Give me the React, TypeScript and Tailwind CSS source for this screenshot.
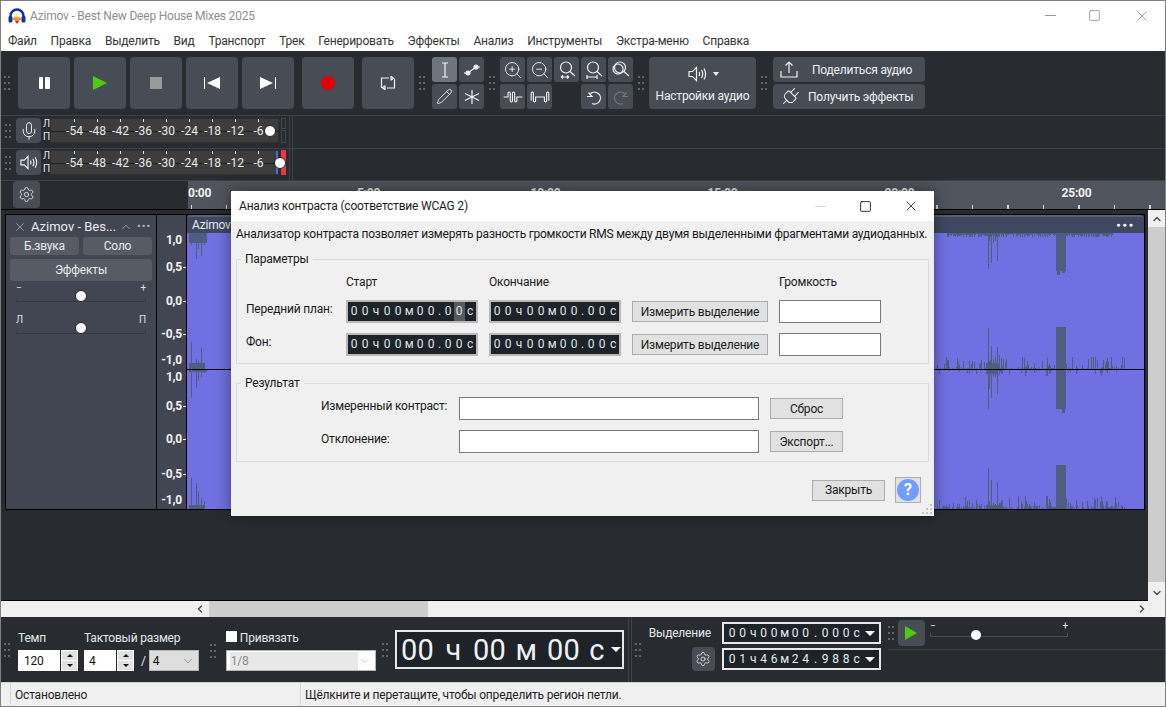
import { ChevronDown, ChevronLeft, ChevronRight, ChevronUp, Mic, Pencil, Plug, Settings, ZoomIn, ZoomOut, Minus, Square, X } from "lucide-react";
import type { ReactNode } from "react";

const font = "font-['Roboto','Liberation_Sans',sans-serif] tracking-[-0.2px]";

const menu = [
  "Файл",
  "Правка",
  "Выделить",
  "Вид",
  "Транспорт",
  "Трек",
  "Генерировать",
  "Эффекты",
  "Анализ",
  "Инструменты",
  "Экстра-меню",
  "Справка",
];

const meterLabels = ["-54", "-48", "-42", "-36", "-30", "-24", "-18", "-12", "-6"];

const ampRows = [
  { label: "1,0", top: "mt-[18px]", tick: false },
  { label: "0,5", top: "mt-[13px]", tick: true },
  { label: "0,0", top: "mt-[20px]", tick: true },
  { label: "-0,5", top: "mt-[19px]", tick: true },
  { label: "-1,0", top: "mt-[12px]", tick: false },
  { label: "1,0", top: "mt-[3px]", tick: false },
  { label: "0,5", top: "mt-[15px]", tick: true },
  { label: "0,0", top: "mt-[19px]", tick: true },
  { label: "-0,5", top: "mt-[21px]", tick: true },
  { label: "-1,0", top: "mt-[12px]", tick: false },
];

// x, hang from top, rise to mid, hang from mid, rise from bottom
const spikes = [
  [192, 12, 27, 29, 31],
  [197, 26, 10, 19, 26],
  [199, 16, 8, 12, 18],
  [202, 23, 21, 8, 11],
  [205, 12, 6, 4, 8],
  [987, 36, 41, 40, 41],
  [988, 8, 8, 20, 8],
  [990, 30, 23, 29, 29],
  [992, 10, 10, 8, 6],
  [994, 8, 12, 8, 5],
  [996, 28, 22, 25, 27],
  [998, 4, 14, 6, 6],
  [1105, 4, 8, 2, 8],
];

function buildWave() {
  let seed = 17;
  const next = () => {
    seed = (seed * 75 + 74) % 65537;
    return seed / 65537;
  };
  let d = "";
  const rect = (x: number, y: number, w: number, h: number) => {
    d += `M${x - 188} ${y}h${w}v${h}h${-w}z`;
  };
  for (let x = 934; x < 1124; x += 1) {
    const r = next();
    const a = next();
    const b = next();
    if (x < 1112 && x > 945) rect(x, 0, 1, 1 + Math.floor(a * 4));
    if (r > 0.5) rect(x, 136 - Math.floor(a * a * 12) - 1, 1, Math.floor(a * a * 12) + 1);
    if (r > 0.6) rect(x, 136, 1, Math.floor(b * b * 7) + 1);
    if (r > 0.4) rect(x, 276 - Math.floor(b * b * 12) - 2, 1, Math.floor(b * b * 12) + 2);
  }
  for (const [x, t, m, h, br] of spikes) {
    rect(x, 0, 1, t);
    rect(x, 136 - m, 1, m);
    rect(x, 136, 1, h);
    rect(x, 276 - br, 1, br);
  }
  rect(190, 0, 18, 10);
  rect(190, 130, 16, 6);
  rect(190, 136, 18, 3);
  rect(190, 272, 16, 4);
  rect(985, 130, 12, 6);
  rect(985, 136, 12, 5);
  rect(985, 272, 12, 4);
  // the loud stretch near 25:00
  rect(1055, 0, 10, 38);
  rect(1056, 38, 3, 4);
  rect(1061, 38, 3, 2);
  rect(1055, 94, 10, 42);
  rect(1055, 136, 10, 40);
  rect(1061, 176, 3, 4);
  rect(1055, 232, 10, 44);
  return d;
}

const wavePath = buildWave();

function Grip() {
  return (
    <div className="grid h-[14px] w-[8px] shrink-0 grid-cols-2 content-between justify-between">
      {[0, 1, 2, 3, 4, 5].map((i) => (
        <span key={i} className="size-[2px] bg-[#62676e]" />
      ))}
    </div>
  );
}

function TBtn({ className, children }: { className: string; children: ReactNode }) {
  return <div className={`flex shrink-0 items-center justify-center rounded-[4px] bg-[#484d55] ${className}`}>{children}</div>;
}

function TransportBtn({ children, className = "" }: { children: ReactNode; className?: string }) {
  return <TBtn className={`size-[52px] ${className}`}>{children}</TBtn>;
}

function Small({ children, active }: { children?: ReactNode; active?: boolean }) {
  return <div className={`flex size-[25px] items-center justify-center rounded-[3px] ${active ? "bg-[#6f757d]" : "bg-[#484d55]"}`}>{children}</div>;
}

function Ico({ children, className = "size-[20px]", stroke = "#f2f2f2" }: { children: ReactNode; className?: string; stroke?: string }) {
  return (
    <svg viewBox="0 0 20 20" fill="none" stroke={stroke} strokeWidth="1.2" className={className}>
      {children}
    </svg>
  );
}

function SpeakerIcon({ className }: { className?: string }) {
  return (
    <Ico className={className}>
      <path d="M2 7.500h3.500L9.500 3.500v13L5.500 12.500H2z" />
      <path d="M12 8c.8 1.300.8 2.700 0 4M14.500 6c1.600 2.600 1.600 5.400 0 8M17 4.500c2 3.400 2 7.600 0 11" />
    </Ico>
  );
}

function Glass({ children }: { children?: ReactNode }) {
  return (
    <Ico>
      <circle cx="9" cy="7.500" r="5.500" />
      <path d="M13 11.500l5 4.500" />
      {children}
    </Ico>
  );
}

function Meter({ kind }: { kind: "mic" | "speaker" }) {
  const mic = kind === "mic";
  return (
    <div className={`flex items-start border-t border-[#3d4248] pl-[4px] ${mic ? "h-[33px] pt-[2px]" : "h-[32px] pt-px"}`}>
      <div className="mt-[6px]">
        <Grip />
      </div>
      <TBtn className="ml-[3px] h-[25px] w-[25px]">
        {mic ? <Mic className="size-[20px] text-[#e8e8e8]" strokeWidth={1.2} /> : <SpeakerIcon className="size-[19px]" />}
      </TBtn>
      <div className="ml-[2px] flex h-[25px] w-[7px] flex-col justify-between text-[10px] leading-[12px] text-[#e6e6e6]">
        <span>Л</span>
        <span>П</span>
      </div>
      <div className="relative h-[25px] w-[229px] border border-[#2f2f2f] bg-[#3d3d3d] tracking-normal">
        <div className="absolute inset-x-0 top-[12px] h-px bg-[#1f1f1f]" />
        <div className="relative flex pl-[12px]">
          {meterLabels.map((m) => (
            <div key={m} className="flex w-[23px] flex-col items-center">
              <span className="h-[3px] w-px bg-[#e0e0e0]" />
              <span className="mt-[2px] bg-[#3d3d3d] text-[12px] leading-[14px] text-[#e8e8e8]">{m}</span>
            </div>
          ))}
        </div>
        {!mic && <span className="absolute right-0 top-0 h-full w-[2px] bg-[#4a6ee0]" />}
        <span className={`absolute top-[6px] size-[12px] rounded-full border border-[#222] bg-white ${mic ? "left-[213px]" : "left-[223px]"}`} />
      </div>
      {mic ? (
        <div className="ml-[2px] flex h-[25px] w-[5px] flex-col gap-px">
          <span className="h-[11px] border border-[#41464c]" />
          <span className="h-[13px] border border-[#41464c]" />
        </div>
      ) : (
        <div className="ml-[2px] h-[25px] w-[5px] bg-[#e83a3a]" />
      )}
      <div className="-mt-[2px] ml-[3px] h-[33px] w-[4px] border-x border-[#3d4248]" />
    </div>
  );
}

function Cells({ text, cell, dot, active }: { text: string; cell: string; dot: string; active?: number }) {
  return (
    <div className="flex">
      {text.split("").map((c, i) => (
        <span key={i} className={`text-center ${c === "." ? dot : cell} ${active === i ? "bg-[#555a60]" : ""}`}>
          {c}
        </span>
      ))}
    </div>
  );
}

function TimeField({ active }: { active?: number }) {
  return (
    <div className="flex h-[23px] w-[132px] items-center justify-center border-2 border-[#b9b9b9] bg-[#1e2329] text-[12px] leading-[19px] text-[#dfe6ea]">
      <Cells text="00ч00м00.00с" cell="w-[11px]" dot="w-[6px]" active={active} />
    </div>
  );
}

function DlgBtn({ children, className = "" }: { children: ReactNode; className?: string }) {
  return <div className={`flex h-[21px] items-center justify-center border border-[#adadad] bg-[#e1e1e1] text-[12px] ${className}`}>{children}</div>;
}

function DlgInput({ className = "" }: { className?: string }) {
  return <div className={`h-[23px] border border-[#7a7a7a] bg-white ${className}`} />;
}

function Spin() {
  return (
    <div className="ml-px flex h-[21px] w-[17px] flex-col gap-px border border-white bg-white">
      <div className="flex flex-1 items-center justify-center bg-[#e1e1e1]">
        <span className="border-x-[3px] border-b-[3px] border-x-transparent border-b-[#111]" />
      </div>
      <div className="flex flex-1 items-center justify-center bg-[#e1e1e1]">
        <span className="border-x-[3px] border-t-[3px] border-x-transparent border-t-[#111]" />
      </div>
    </div>
  );
}

function SelTime({ text }: { text: string }) {
  return (
    <div className="flex h-[22px] w-[159px] items-center border-2 border-[#e8e8e8] bg-[#1e2329] pl-[3px] text-[12px] leading-[18px] text-[#e6ecef]">
      <Cells text={text} cell="w-[10.500px]" dot="w-[9px]" />
      <span className="ml-[3px] border-x-[5px] border-t-[5px] border-x-transparent border-t-white" />
    </div>
  );
}

function VSlider({ left, right, thumb }: { left: string; right: string; thumb: string }) {
  return (
    <div className="relative mx-[10px] h-[26px] w-[130px] text-[10px] leading-[12px] text-[#e0e0e0]">
      <div className="flex justify-between">
        <span>{left}</span>
        <span>{right}</span>
      </div>
      <div className="mt-[4px] h-[4px] border-x border-b border-[#353941]" />
      <span className={`absolute left-[59px] size-[12px] rounded-full border border-[#222] bg-white ${thumb}`} />
    </div>
  );
}

function Dialog() {
  return (
    <div className="absolute left-[230px] top-[190px] flex h-[325px] w-[703px] flex-col bg-[#f0f0f0] text-[12px] text-[#1a1a1a] shadow-[0_0_14px_rgba(0,0,0,0.45)]">
      <div className="flex h-[30px] shrink-0 items-center bg-white pl-[8px]">
        <span className="flex-1">Анализ контраста (соответствие WCAG 2)</span>
        <Minus className="mr-[30px] size-[17px] text-[#c8c8c8]" strokeWidth={1} />
        <Square className="mr-[31px] size-[13px] text-[#111]" strokeWidth={1.6} />
        <X className="mr-[15px] size-[16px] text-[#111]" strokeWidth={1.2} />
      </div>
      <div className="mt-[5px] h-[16px] shrink-0 whitespace-nowrap pl-[5px] leading-[16px] tracking-[-0.23px]">
        Анализатор контраста позволяет измерять разность громкости RMS между двумя выделенными фрагментами аудиоданных.
      </div>
      <fieldset className="mx-[5px] mt-[9px] h-[113px] shrink-0 border border-[#dcdcdc] pl-[9px]">
        <legend className="-ml-[5px] px-[4px] leading-[16px]">Параметры</legend>
        <div className="mt-[7px] grid grid-cols-[100px_143px_143px_147px_102px] items-center gap-y-[10px]">
          <span />
          <span className="h-[16px] leading-[16px]">Старт</span>
          <span className="h-[16px] leading-[16px]">Окончание</span>
          <span />
          <span className="h-[16px] leading-[16px]">Громкость</span>
          <span className="-mt-[6px]">Передний план:</span>
          <TimeField active={10} />
          <TimeField />
          <DlgBtn className="w-[136px]">Измерить выделение</DlgBtn>
          <DlgInput className="w-[102px]" />
          <span className="-mt-[6px]">Фон:</span>
          <TimeField />
          <TimeField />
          <DlgBtn className="w-[136px]">Измерить выделение</DlgBtn>
          <DlgInput className="w-[102px]" />
        </div>
      </fieldset>
      <fieldset className="mx-[5px] mt-[11px] h-[87px] shrink-0 border border-[#dcdcdc] pl-[84px]">
        <legend className="-ml-[80px] px-[4px] leading-[16px]">Результат</legend>
        <div className="mt-[6px] grid grid-cols-[138px_311px_73px] items-center gap-y-[10px]">
          <span className="-mt-[6px]">Измеренный контраст:</span>
          <DlgInput className="w-[300px]" />
          <DlgBtn className="w-[73px]">Сброс</DlgBtn>
          <span className="-mt-[6px]">Отклонение:</span>
          <DlgInput className="w-[300px]" />
          <DlgBtn className="w-[73px]">Экспорт...</DlgBtn>
        </div>
      </fieldset>
      <div className="mr-[13px] mt-[15px] flex items-center justify-end gap-[10px]">
        <DlgBtn className="w-[73px]">Закрыть</DlgBtn>
        <div className="flex size-[26px] items-center justify-center border border-[#adadad] bg-[#e1e1e1]">
          <span className="flex size-[22px] items-center justify-center rounded-full bg-[#6f9eff] text-[16px] font-bold text-white">?</span>
        </div>
      </div>
      <svg viewBox="0 0 10 10" className="absolute bottom-[2px] right-[2px] size-[10px] fill-[#c4c4c4]">
        <rect x="8" y="0" width="2" height="2" />
        <rect x="4" y="4" width="2" height="2" />
        <rect x="8" y="4" width="2" height="2" />
        <rect x="0" y="8" width="2" height="2" />
        <rect x="4" y="8" width="2" height="2" />
        <rect x="8" y="8" width="2" height="2" />
      </svg>
    </div>
  );
}

export default function App() {
  return (
    <div className={`relative flex h-[707px] w-[1166px] flex-col overflow-hidden border border-[#7f7f7f] bg-[#282c30] ${font}`}>
      {/* title bar */}
      <div className="flex h-[29px] shrink-0 items-center bg-white pl-[7px] text-[12px] text-[#8e8e8e]">
        <svg viewBox="0 0 18 18" className="size-[18px]">
          <path d="M2.500 11V9a6.500 6.500 0 0 1 13 0v2" fill="none" stroke="#0d2fa8" strokeWidth="2.400" />
          <rect x="0.500" y="9" width="4" height="6.500" rx="1.500" fill="#0d2fa8" />
          <rect x="13.500" y="9" width="4" height="6.500" rx="1.500" fill="#0d2fa8" />
          <path d="M5 10.500h8v2H5z" fill="#f5b400" />
          <path d="M5 12h1l1-4.500 1 6.500 1-7.500 1 8 1-5.500 1 3h1v1H5z" fill="#f08a10" />
          <path d="M6.500 13.500h5L9 17z" fill="#e21a1a" />
        </svg>
        <span className="ml-[4px] flex-1">Azimov - Best New Deep House Mixes 2025</span>
        <Minus className="mr-[29px] size-[17px] text-[#666]" strokeWidth={1} />
        <Square className="mr-[33px] size-[13px] text-[#666]" strokeWidth={1.1} />
        <X className="mr-[15px] size-[16px] text-[#666]" strokeWidth={1} />
      </div>
      {/* menu */}
      <div className="flex h-[21px] shrink-0 items-center gap-[13.750px] bg-white pl-[7px] text-[12px] text-[#333]">
        {menu.map((m) => (
          <span key={m}>{m}</span>
        ))}
      </div>
      {/* main toolbar */}
      <div className="flex h-[64px] shrink-0 items-center pl-[3px]">
        <Grip />
        <div className="ml-[6px] flex gap-[4px]">
          <TransportBtn>
            <div className="flex gap-[2px]">
              <span className="h-[12px] w-[4.500px] rounded-[1px] bg-white" />
              <span className="h-[12px] w-[4.500px] rounded-[1px] bg-white" />
            </div>
          </TransportBtn>
          <TransportBtn>
            <span className="border-y-[7px] border-l-[14px] border-y-transparent border-l-[#4fcb0e]" />
          </TransportBtn>
          <TransportBtn>
            <span className="size-[12px] bg-[#999]" />
          </TransportBtn>
          <TransportBtn>
            <span className="mr-[2px] h-[12px] w-px bg-white" />
            <span className="border-y-[6px] border-r-[13px] border-y-transparent border-r-white" />
          </TransportBtn>
          <TransportBtn>
            <span className="border-y-[6px] border-l-[13px] border-y-transparent border-l-white" />
            <span className="ml-[2px] h-[12px] w-px bg-white" />
          </TransportBtn>
          <TransportBtn className="ml-[4px]">
            <span className="size-[14px] rounded-full bg-[#e00000]" />
          </TransportBtn>
          <TransportBtn className="ml-[4px]">
            <Ico>
              <path d="M3.500 15V5H11M13 3v4.500M13 3.200L15.500 5.200 13 7.200" />
              <path d="M16.500 5.500V15H9M7 12.500V17M7 12.800L4.500 14.800 7 16.800" />
            </Ico>
          </TransportBtn>
        </div>
        <div className="ml-[5px]">
          <Grip />
        </div>
        <div className="ml-[5px] grid grid-cols-[25px_25px] gap-[2px]">
          <Small active>
            <Ico>
              <path d="M7 3h6M7 17h6M10 3v14" />
            </Ico>
          </Small>
          <Small>
            <Ico>
              <path d="M2 13h4l8-6h4" />
              <circle cx="6" cy="13" r="2" fill="#f2f2f2" />
              <circle cx="14" cy="7" r="2" fill="#f2f2f2" />
            </Ico>
          </Small>
          <Small>
            <Pencil className="size-[17px] text-[#f2f2f2]" strokeWidth={1.2} />
          </Small>
          <Small>
            <Ico>
              <path d="M10 3v14M3 6.500l14 7M17 6.500l-14 7" />
            </Ico>
          </Small>
        </div>
        <div className="ml-[5px]">
          <Grip />
        </div>
        <div className="ml-[3px] grid grid-cols-[25px_25px_25px_25px_25px] gap-[2px]">
          <Small>
            <ZoomIn className="size-[20px] text-[#f2f2f2]" strokeWidth={1.1} />
          </Small>
          <Small>
            <ZoomOut className="size-[20px] text-[#f2f2f2]" strokeWidth={1.1} />
          </Small>
          <Small>
            <Glass>
              <path d="M4 17h8M4 17l2-1.500M4 17l2 1.500M12 17l-2-1.500M12 17l-2 1.500" />
            </Glass>
          </Small>
          <Small>
            <Glass>
              <path d="M3 17h10M3 15v4M13 15v4" />
            </Glass>
          </Small>
          <Small>
            <Glass>
              <circle cx="7" cy="9" r="5" />
            </Glass>
          </Small>
          <Small>
            <Ico className="size-[22px]">
              <path d="M1.500 10h4V6.500a1 1 0 0 1 2 0v7a1 1 0 0 0 2 0v-7a1 1 0 0 1 2 0v7a1 1 0 0 0 2 0V10h5" strokeWidth="1" />
            </Ico>
          </Small>
          <Small>
            <Ico className="size-[22px]">
              <path d="M2 13.500v-7a1 1 0 0 1 2 0v7a1 1 0 0 0 2 0V10h8v3.500a1 1 0 0 0 2 0v-7a1 1 0 0 1 2 0v7" strokeWidth="1" />
            </Ico>
          </Small>
          <span />
          <Small>
            <Ico>
              <path d="M6.500 6.500A6 6 0 1 1 8 16.500" />
              <path d="M3 9.500h5l-3.500-4" />
            </Ico>
          </Small>
          <Small>
            <Ico stroke="#74787e">
              <path d="M13.500 6.500A6 6 0 1 0 12 16.500" />
              <path d="M17 9.500h-5l3.500-4" />
            </Ico>
          </Small>
        </div>
        <div className="ml-[5px]">
          <Grip />
        </div>
        <TBtn className="ml-[3px] h-[52px] w-[107px] flex-col gap-[5px]">
          <div className="flex items-center gap-[6px]">
            <SpeakerIcon className="size-[20px]" />
            <span className="border-x-[3.500px] border-t-[4px] border-x-transparent border-t-[#eee]" />
          </div>
          <span className="text-[12px] leading-[14px] text-[#eef0f2]">Настройки аудио</span>
        </TBtn>
        <div className="ml-[5px]">
          <Grip />
        </div>
        <div className="ml-[4px] flex flex-col gap-[2px]">
          <TBtn className="h-[25px] w-[152px] justify-start pl-[6px]">
            <Ico className="size-[20px]">
              <path d="M2 11v6h16v-6M10 13V2M6.500 5.500L10 2l3.500 3.500" />
            </Ico>
            <span className="ml-[13px] text-[12px] text-[#eef0f2]">Поделиться аудио</span>
          </TBtn>
          <TBtn className="h-[25px] w-[152px] justify-start pl-[6px]">
            <Plug className="size-[22px] rotate-45 text-[#f2f2f2]" strokeWidth={1.1} />
            <span className="ml-[7px] text-[12px] text-[#eef0f2]">Получить эффекты</span>
          </TBtn>
        </div>
      </div>
      {/* meters */}
      <Meter kind="mic" />
      <Meter kind="speaker" />
      {/* timeline */}
      <div className="flex h-[30px] shrink-0 border-y border-t-[#3d4248] border-b-black">
        <div className="w-[187px] shrink-0 pl-[12px]">
          <TBtn className="size-[27px]">
            <Settings className="size-[17px] text-[#e8e8e8]" strokeWidth={1.2} />
          </TBtn>
        </div>
        <div className="relative flex-1 bg-[#50545c] text-[12px] font-bold leading-[24px] text-[#f2f2f2]">
          <div className="flex">
            <span className="w-[92px]">0:00</span>
            <span className="w-[177px] text-center">5:00</span>
            <span className="w-[177px] text-center">10:00</span>
            <span className="w-[177px] text-center">15:00</span>
            <span className="w-[177px] text-center">20:00</span>
            <span className="w-[177px] text-center">25:00</span>
          </div>
          <div className="absolute inset-x-0 bottom-0 h-[4px] bg-[repeating-linear-gradient(90deg,#d8d8d8_0,#d8d8d8_1px,transparent_1px,transparent_35.500px)] bg-[position:3px_0]" />
        </div>
      </div>
      {/* tracks */}
      <div className="flex min-h-0 flex-1">
        <div className="min-w-0 flex-1 border-b border-black pl-[4px] pt-[4px]">
          <div className="flex h-[296px] w-[1140px] border border-black">
            <div className="flex w-[151px] shrink-0 flex-col border-r border-black bg-[#414652] text-[12px] text-[#e8eaee]">
              <div className="flex h-[22px] items-center pl-[7px] pt-[2px]">
                <X className="size-[14px] text-[#cfd2d6]" strokeWidth={1} />
                <span className="ml-[4px] w-[88px] whitespace-nowrap text-[13px] tracking-normal">Azimov - Bes...</span>
                <ChevronUp className="size-[14px] text-[#cfd2d6]" strokeWidth={1} />
                <span className="ml-[4px] text-[11px] tracking-[1px] text-[#b5b8bd]">•••</span>
              </div>
              <div className="flex gap-[4px] px-[4px]">
                <div className="flex h-[18px] w-[69px] items-center justify-center rounded-[3px] bg-[#565b64]">Б.звука</div>
                <div className="flex h-[18px] w-[69px] items-center justify-center rounded-[3px] bg-[#565b64]">Соло</div>
              </div>
              <div className="mx-[4px] mt-[4px] flex h-[22px] items-center justify-center rounded-[3px] bg-[#565b64]">Эффекты</div>
              <div className="mt-px">
                <VSlider left="−" right="+" thumb="top-[8px]" />
              </div>
              <div className="mt-[6px]">
                <VSlider left="Л" right="П" thumb="top-[8px]" />
              </div>
            </div>
            <div className="flex w-[30px] shrink-0 flex-col border-r border-black bg-[#414652] text-[12px] font-bold leading-[14px] text-[#f2f2f2]">
              {ampRows.map((r, i) => (
                <div key={i} className={`flex h-[14px] items-center justify-end ${r.top}`}>
                  <span>{r.label}</span>
                  <span className={`ml-px h-px w-[3px] ${r.tick ? "bg-[#f2f2f2]" : ""}`} />
                </div>
              ))}
            </div>
            <div className="flex min-w-0 flex-1 flex-col">
              <div className="flex h-[18px] shrink-0 items-center rounded-t-[4px] border-t-2 border-[#5a6072] bg-[#3f4860] pl-[5px] pr-[9px] text-[12px] text-[#e8eaee]">
                <span className="flex-1">Azimov</span>
                <span className="text-[7px] tracking-[2px] text-white">●●●</span>
              </div>
              <svg viewBox="0 0 955 276" preserveAspectRatio="none" shapeRendering="crispEdges" className="block h-[276px] w-full bg-[#7070e2]">
                <path d={wavePath} fill="#4f5d80" />
                <rect x="0" y="136" width="955" height="1" fill="#000" />
              </svg>
            </div>
          </div>
        </div>
        <div className="flex w-[17px] shrink-0 flex-col bg-[#f0f0f0]">
          <div className="flex h-[17px] items-center justify-center">
            <ChevronUp className="size-[12px] text-[#505050]" strokeWidth={3} />
          </div>
          <div className="h-[355px] bg-[#cdcdcd]" />
          <div className="flex flex-1 items-end justify-center pb-[2px]">
            <ChevronDown className="size-[12px] text-[#505050]" strokeWidth={3} />
          </div>
        </div>
      </div>
      {/* horizontal scrollbar */}
      <div className="flex h-[16px] shrink-0 items-center bg-[#f0f0f0] pl-[193px] pr-[17px]">
        <ChevronLeft className="size-[12px] text-[#505050]" strokeWidth={3} />
        <div className="ml-[3px] h-full w-[219px] bg-[#cdcdcd]" />
        <div className="flex-1" />
        <ChevronRight className="size-[12px] text-[#505050]" strokeWidth={3} />
      </div>
      {/* bottom toolbar */}
      <div className="flex h-[65px] shrink-0 items-center pl-[3px] text-[12px] text-[#e4e8ea]">
        <Grip />
        <div className="ml-[6px] pt-px">
          <div className="flex h-[21px] items-start">
            <span className="w-[66px]">Темп</span>
            <span>Тактовый размер</span>
          </div>
          <div className="flex items-center text-[#111]">
            <div className="flex h-[21px] w-[42px] items-center border border-white bg-white pl-[5px]">120</div>
            <Spin />
            <div className="ml-[6px] flex h-[21px] w-[32px] items-center bg-white pl-[5px]">4</div>
            <Spin />
            <span className="ml-[7px] text-[#e4e8ea]">/</span>
            <div className="ml-[3px] flex h-[21px] w-[50px] items-center justify-between border border-[#b5b5b5] bg-[#dedede] pl-[3px] pr-[3px]">
              <span>4</span>
              <ChevronDown className="size-[14px] text-[#555]" strokeWidth={1} />
            </div>
          </div>
        </div>
        <div className="ml-[11px] mt-[3px]">
          <Grip />
        </div>
        <div className="ml-[8px] pt-px">
          <div className="flex h-[21px] items-start gap-[3px]">
            <span className="mt-[2px] size-[11px] bg-white" />
            <span>Привязать</span>
          </div>
          <div className="flex h-[21px] w-[150px] items-center justify-between border border-[#b5b5b5] bg-white pl-[3px] pr-[3px] text-[#8a8a8a]">
            <span className="w-[129px] bg-[#e8e8e8] pl-px">1/8</span>
            <ChevronDown className="size-[14px] text-[#b0b0b0]" strokeWidth={1} />
          </div>
        </div>
        <div className="ml-[6px]">
          <Grip />
        </div>
        <div className="ml-[5px] flex h-[39px] w-[229px] items-center border-2 border-[#e8e8e8] bg-[#1e2329] pl-[4px] text-[29px] leading-[34px] text-[#eef2f4]">
          <Cells text="00ч00м00с" cell="w-[16.500px] [&:nth-child(3)]:w-[39px] [&:nth-child(6)]:w-[41px] [&:nth-child(9)]:w-[34px]" dot="" />
          <span className="-ml-[3px] border-x-[5px] border-t-[5px] border-x-transparent border-t-white" />
        </div>
        <div className="ml-[4px] h-[65px] w-[4px] border-x border-[#3d4248]" />
        <div className="ml-[3px]">
          <Grip />
        </div>
        <div className="ml-[6px] flex flex-col items-end pb-[6px]">
          <div className="flex h-[22px] items-center gap-[11px]">
            <span>Выделение</span>
            <SelTime text="00ч00м00.000с" />
          </div>
          <div className="mt-[3px] flex items-center gap-[7px]">
            <TBtn className="h-[24px] w-[23px]">
              <Settings className="size-[16px] text-[#e8e8e8]" strokeWidth={1.2} />
            </TBtn>
            <SelTime text="01ч46м24.988с" />
          </div>
        </div>
        <div className="ml-[7px] flex h-full flex-1 flex-col">
          <div className="flex h-[32px] items-center">
            <Grip />
            <TBtn className="ml-[2px] h-[26px] w-[27px]">
              <span className="border-y-[7px] border-l-[12px] border-y-transparent border-l-[#4fcb0e]" />
            </TBtn>
            <div className="relative ml-[5px] h-[24px] w-[138px] text-[10px] leading-[10px]">
              <div className="flex justify-between">
                <span>−</span>
                <span>+</span>
              </div>
              <div className="mt-[2px] h-[4px] border-x border-b border-[#4a4f55]" />
              <span className="absolute left-[41px] top-[9px] size-[10px] rounded-full bg-white" />
            </div>
          </div>
          <div className="border-t border-[#3d4248]" />
        </div>
      </div>
      {/* status bar */}
      <div className="flex h-[24px] shrink-0 items-center border-t border-[#d0d0d0] bg-[#f0f0f0] pl-[9px] text-[12px] text-[#222]">
        <div className="flex h-full w-[291px] items-center border-x border-[#d7d7d7] pl-[4px]">Остановлено</div>
        <div className="pl-[4px]">Щёлкните и перетащите, чтобы определить регион петли.</div>
      </div>
      <Dialog />
    </div>
  );
}
